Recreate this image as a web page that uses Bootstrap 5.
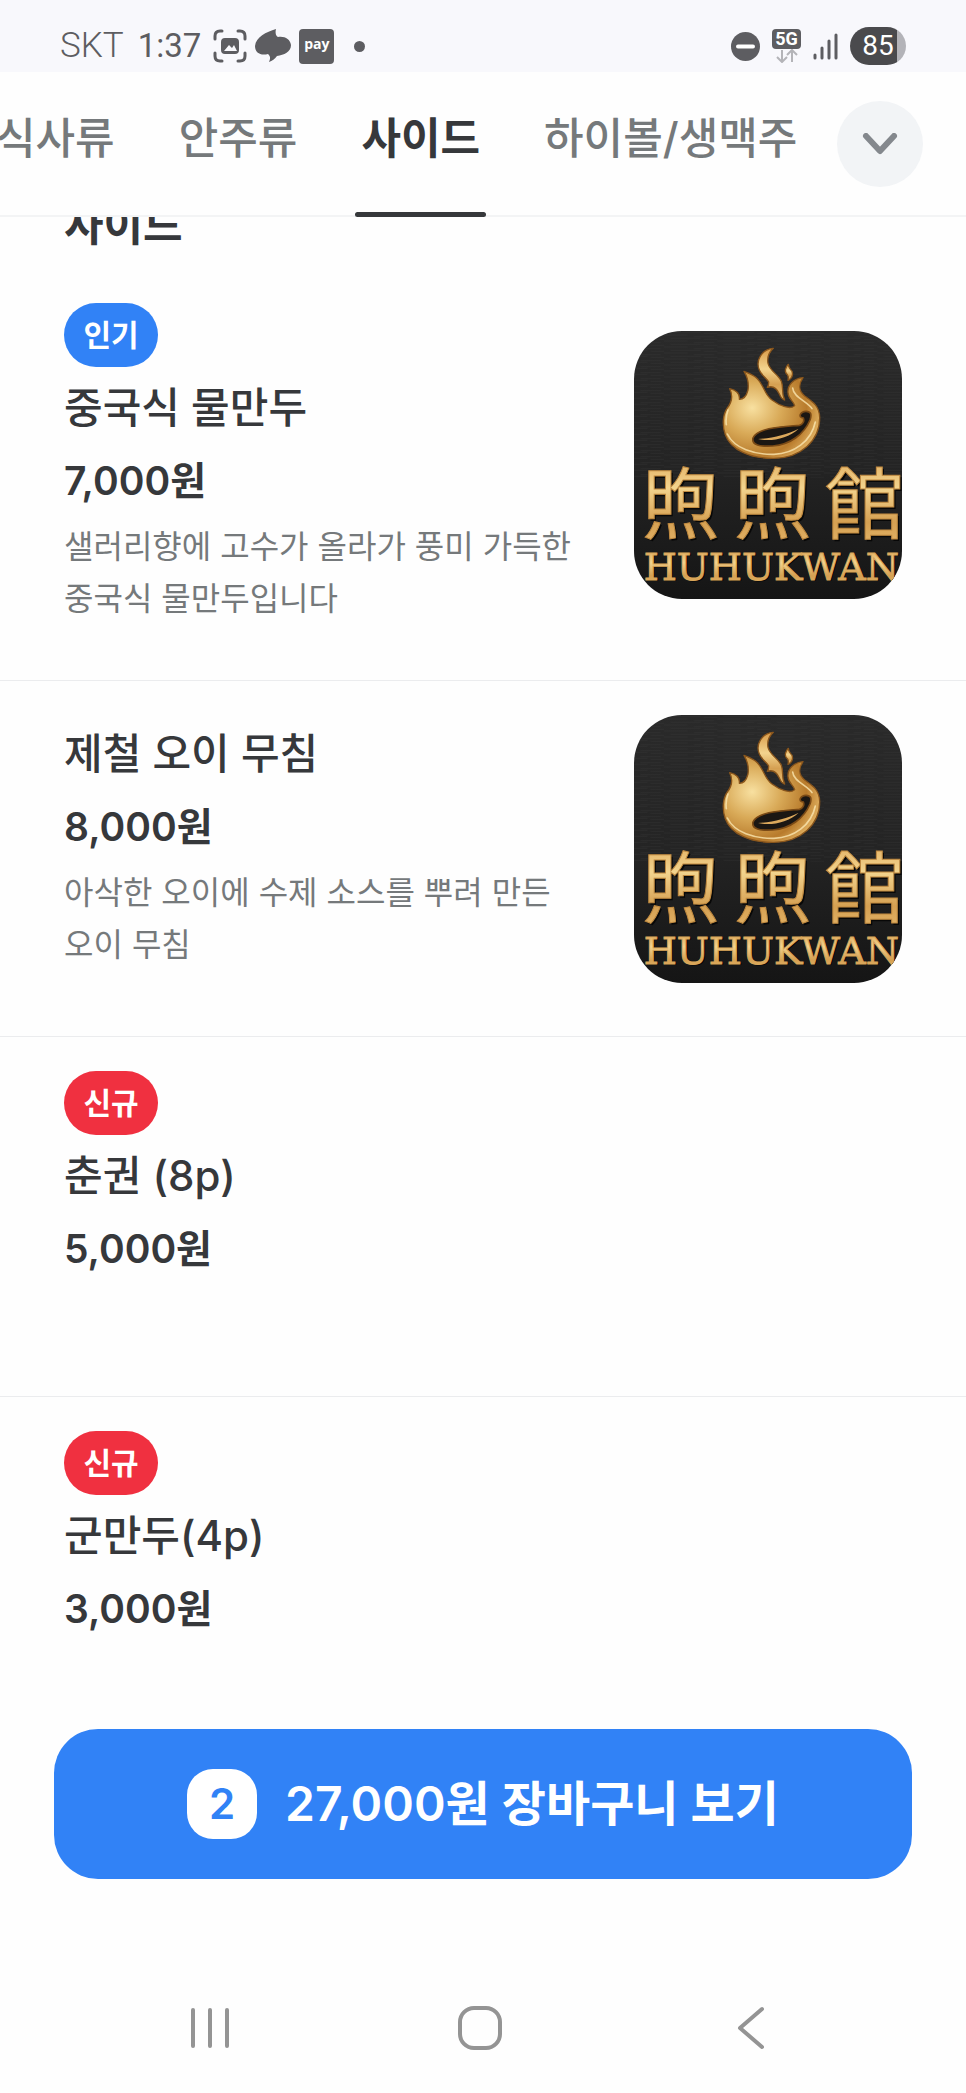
<!DOCTYPE html>
<html lang="ko">
<head>
<meta charset="utf-8">
<meta name="viewport" content="width=device-width, initial-scale=1">
<title>사이드 메뉴</title>
<link rel="stylesheet" href="https://cdn.jsdelivr.net/npm/bootstrap@5.3.0/dist/css/bootstrap.min.css">
<style>
  :root { --ink: #36383b; --dim: #75797b; --brand: #3182f6; --new: #f03040; --rule: #f3f4f5; }
  body { font-family: Inter, "Noto Sans CJK KR", sans-serif; color: var(--ink); background: #fefefe; }
  svg { display: block; flex: none; }

  .status-bar { height: 72px; padding: 20px 60px 0; background: #f8f8fc; color: #5d5d61; font: 400 35px/52px Roboto, sans-serif; }
  .carrier { font-weight: 300; }
  .clock { margin: 0 12px 0 14px; font-size: 33px; }
  .pay-chip { width: 35px; height: 35px; border-radius: 4px; background: #5d5d61; color: #fff; font: 700 14px/30px "Open Sans", sans-serif; text-align: center; }
  .dot { width: 11px; height: 11px; margin-left: 20px; background: #5d5d61; }
  .net { width: 29px; height: 20px; border-radius: 4px; background: #5d5d61; color: #fff; font: 700 18px/20px Roboto, sans-serif; text-align: center; }
  .signals { gap: 12px; }
  .battery { width: 56px; height: 38px; border-radius: 19px; background: linear-gradient(90deg, #4a4a4d 47px, #b3b3b8 47px); color: #fff; font: 400 28px/38px Roboto, sans-serif; text-align: center; }

  .tab-bar { height: 145px; padding-right: 43px; border-bottom: 2px solid var(--rule); }
  .tab-list { margin-left: -10px; gap: 52px; height: 145px; }
  .tab-list .nav-link { height: 145px; padding: 36px 6px 0; font-size: 43px; line-height: 60px; font-weight: 500; color: var(--dim); white-space: nowrap; }
  .tab-list .nav-link.active { color: var(--ink); font-weight: 700; position: relative; }
  .tab-list .nav-link.active::after { content: ""; position: absolute; left: 0; right: 0; bottom: 0; height: 5px; border-radius: 3px; background: var(--ink); }
  .more-btn { width: 86px; height: 86px; background: #f2f4f6; }

  .section-title { margin: -22px 0 14px; padding: 0 64px; font-size: 43px; line-height: 60px; font-weight: 700; }
  .menu-item { padding: 34px 64px 53px; border-bottom: 1px solid #ebecee; }
  .menu-item.no-photo { min-height: 360px; }
  .menu-item:last-child { border: 0; min-height: 0; padding-bottom: 0; }
  .tag { width: 94px; height: 64px; margin-bottom: 12px; border-radius: 32px; color: #fff; font-size: 30px; line-height: 64px; font-weight: 700; text-align: center; }
  .tag-hot { background: var(--brand); }
  .tag-new { background: var(--new); }
  .item-name { margin: 0 0 14px; font-size: 42px; line-height: 58px; font-weight: 500; }
  .item-price { margin: 0; font-size: 39px; line-height: 60px; font-weight: 600; }
  .item-desc { margin: 10px 0 2px; font-size: 32px; line-height: 52px; color: var(--dim); }
  .thumb { width: 268px; height: 268px; border-radius: 48px; }

  .cart-area { padding: 0 54px; }
  .cart-btn, .cart-btn:hover { height: 150px; border-radius: 44px; background: var(--brand); color: #fff; gap: 28px; font-size: 48px; font-weight: 600; }
  .count { width: 70px; height: 70px; border-radius: 26px; background: #fff; color: var(--brand); font-size: 42px; line-height: 70px; }
  .system-nav { height: 130px; margin-top: 84px; padding: 0 80px 0 75px; }
</style>
</head>
<body>
<!-- artwork shared by the menu thumbnails -->
<svg width="0" height="0" class="position-absolute" aria-hidden="true">
  <defs>
    <linearGradient id="gold" x1="0" y1="0" x2="0" y2="1"><stop offset="0" stop-color="#d89a48"/><stop offset=".4" stop-color="#f3d48e"/><stop offset=".7" stop-color="#d5a052"/><stop offset="1" stop-color="#e9bd72"/></linearGradient>
    <radialGradient id="body" cx=".3" cy=".42" r=".75"><stop offset="0" stop-color="#f8e0a0"/><stop offset=".4" stop-color="#d9aa58"/><stop offset=".75" stop-color="#b87b2c"/><stop offset="1" stop-color="#e6b868"/></radialGradient>
    <linearGradient id="slate" x1="0" y1="0" x2="0" y2="1"><stop offset="0" stop-color="#2a2a2a"/><stop offset=".5" stop-color="#242424"/><stop offset="1" stop-color="#151515"/></linearGradient>
    <pattern id="grain" width="160" height="18" patternUnits="userSpaceOnUse"><path d="M0 3h70M90 8h60M20 13h90M120 16h40" stroke="#3a3a3a" stroke-width="1.5" opacity=".6"/></pattern>
    <symbol id="logo" viewBox="70 63 804 804">
      <rect x="70" y="63" width="804" height="804" fill="url(#slate)"/>
      <rect x="70" y="63" width="804" height="440" fill="url(#grain)"/>
      <g stroke="#8a561c" stroke-width="4" stroke-linejoin="round">
        <path fill="url(#body)" d="M357 236C368 258 364 276 350 294C336 314 334 345 344 374C360 420 420 446 490 445C570 444 628 392 627 322C626 286 604 274 582 258C563 243 564 222 577 203C548 206 530 226 532 248C533 268 550 274 552 287C540 300 508 288 484 270C460 252 460 226 440 206C428 194 414 190 400 184C414 206 414 226 412 240C408 256 398 268 386 268C388 250 374 240 357 236Z"/>
        <path fill="url(#gold)" d="M488 115C452 118 434 152 446 180C452 196 468 204 474 216C474 224 472 230 470 232C488 226 500 238 506 252C510 262 516 268 522 270C511 248 520 236 512 214C504 194 478 184 472 160C469 144 476 126 488 115Z"/>
        <path fill="url(#gold)" d="M533 163C524 172 520 186 530 194C535 200 533 206 532 211C544 206 548 194 544 184C540 178 533 174 533 163Z"/>
      </g>
      <path fill="#1b1713" stroke="#7a4a16" stroke-width="5" d="M566 346C520 350 440 352 427 384C422 406 448 410 486 408C540 404 580 372 598 330C604 312 600 304 586 304C570 304 560 322 578 324C582 334 576 344 566 346Z"/>
      <path fill="#dca95c" d="M442 387C486 384 528 374 564 356C532 386 480 396 442 387Z"/>
      <path fill="none" stroke="#fae6b0" stroke-width="5" stroke-linecap="round" opacity=".8" d="M350 372C372 416 430 434 490 433C550 431 602 394 614 336M546 234C548 262 590 274 604 296M352 300C346 316 345 330 347 344"/>
      <g font-family="'Noto Sans CJK TC', sans-serif" font-weight="400" font-size="236">
        <g fill="#070707"><text x="96" y="676">煦</text><text x="372" y="676">煦</text><text x="648" y="676">館</text></g>
        <g fill="url(#gold)" stroke="#c08a40" stroke-width="3"><text x="91" y="670">煦</text><text x="367" y="670">煦</text><text x="643" y="670">館</text></g>
      </g>
      <g font-family="'DejaVu Serif', serif" font-size="114">
        <text x="103" y="814" fill="#050505">HUHUKWAN</text>
        <text x="99" y="810" fill="url(#gold)" stroke="#d9a65a" stroke-width="3">HUHUKWAN</text>
      </g>
    </symbol>
  </defs>
</svg>

<div class="d-flex flex-column min-vh-100 overflow-hidden">
  <div class="status-bar d-flex justify-content-between">
    <div class="d-flex align-items-center">
      <span class="carrier">SKT</span><span class="clock">1:37</span>
      <svg width="34" height="34" viewBox="0 0 34 34" fill="none" stroke="#5d5d61" stroke-width="3" stroke-linecap="round"><path d="M2 10V7q0-5 5-5h2M25 2h2q5 0 5 5v3M32 24v3q0 5-5 5h-2M9 32H7q-5 0-5-5v-3"/><rect x="9" y="10" width="16" height="14" rx="3" fill="#5d5d61" stroke-width="2"/><path d="M11 22l5-6 3 3 2-3 3 6z" fill="#f8f8fc" stroke="none"/></svg>
      <svg class="ms-2" width="36" height="34" viewBox="0 0 36 34" fill="#5d5d61"><path d="M21 0C20 4 21 7 23 8C30 7 35 10 36 16C36 23 29 26 22 27C20 30 17 32 14 33C16 29 15 27 13 25C6 27 0 24 0 17C1 8 11 3 21 0Z"/></svg>
      <span class="pay-chip ms-2">pay</span>
      <span class="dot rounded-circle"></span>
    </div>
    <div class="signals d-flex align-items-center">
      <svg width="29" height="29" viewBox="0 0 29 29"><circle cx="14.500" cy="14.500" r="14.500" fill="#5d5d61"/><path d="M7 14.500h15" stroke="#fff" stroke-width="4" stroke-linecap="round"/></svg>
      <div class="d-flex flex-column align-items-center"><span class="net">5G</span>
        <svg width="24" height="14" viewBox="0 0 24 14" fill="none" stroke="#b4b4b8" stroke-width="2"><path d="M7 1v11M2 8l5 5 5-5M17 13V2M12 6l5-5 5 5"/></svg></div>
      <svg width="25" height="27" viewBox="0 0 25 27" stroke="#5d5d61" stroke-width="3" stroke-linecap="round"><path d="M2 22v3M9 15v10M16 8v17M23 2v23"/></svg>
      <span class="battery">85</span>
    </div>
  </div>

  <header class="tab-bar d-flex align-items-center">
    <nav class="flex-grow-1 overflow-hidden align-self-start">
      <div class="nav flex-nowrap tab-list">
        <a class="nav-link" href="#meal">식사류</a>
        <a class="nav-link" href="#snack">안주류</a>
        <a class="nav-link active" href="#side" aria-current="page">사이드</a>
        <a class="nav-link" href="#drink">하이볼/생맥주</a>
      </div>
    </nav>
    <button type="button" class="more-btn btn rounded-circle border-0 p-0 d-flex align-items-center justify-content-center flex-shrink-0" aria-label="메뉴 더보기">
      <svg width="36" height="22" viewBox="0 0 36 22" fill="none" stroke="#84888d" stroke-width="6" stroke-linecap="round" stroke-linejoin="round"><path d="M4 3l14 15L32 3"/></svg>
    </button>
  </header>

  <main id="side" class="flex-grow-1 overflow-hidden">
    <h2 class="section-title">사이드</h2>
    <article class="menu-item d-flex align-items-center justify-content-between">
      <div>
        <div class="tag tag-hot">인기</div>
        <h3 class="item-name">중국식 물만두</h3>
        <p class="item-price">7,000원</p>
        <p class="item-desc">샐러리향에 고수가 올라가 풍미 가득한<br>중국식 물만두입니다</p>
      </div>
      <svg class="thumb" role="img" aria-label="중국식 물만두"><use href="#logo"/></svg>
    </article>
    <article class="menu-item d-flex align-items-center justify-content-between">
      <div>
        <h3 class="item-name">제철 오이 무침</h3>
        <p class="item-price">8,000원</p>
        <p class="item-desc">아삭한 오이에 수제 소스를 뿌려 만든<br>오이 무침</p>
      </div>
      <svg class="thumb" role="img" aria-label="제철 오이 무침"><use href="#logo"/></svg>
    </article>
    <article class="menu-item no-photo">
      <div class="tag tag-new">신규</div>
      <h3 class="item-name">춘권 (8p)</h3>
      <p class="item-price">5,000원</p>
    </article>
    <article class="menu-item no-photo">
      <div class="tag tag-new">신규</div>
      <h3 class="item-name">군만두(4p)</h3>
      <p class="item-price">3,000원</p>
    </article>
  </main>

  <footer>
    <div class="cart-area">
      <button type="button" class="cart-btn btn border-0 w-100 d-flex align-items-center justify-content-center"><span class="count">2</span><span>27,000원 장바구니 보기</span></button>
    </div>
    <nav class="system-nav d-flex" aria-label="시스템">
      <button type="button" class="btn border-0 flex-fill w-100 d-flex align-items-center justify-content-center" aria-label="최근 앱"><svg width="40" height="42" viewBox="0 0 40 42" stroke="#949494" stroke-width="4" stroke-linecap="round"><path d="M3 3v36M20 3v36M37 3v36"/></svg></button>
      <button type="button" class="btn border-0 flex-fill w-100 d-flex align-items-center justify-content-center" aria-label="홈"><svg width="44" height="44" viewBox="0 0 44 44" fill="none" stroke="#949494" stroke-width="4"><rect x="2" y="2" width="40" height="40" rx="14"/></svg></button>
      <button type="button" class="btn border-0 flex-fill w-100 d-flex align-items-center justify-content-center" aria-label="뒤로"><svg width="28" height="44" viewBox="0 0 28 44" fill="none" stroke="#949494" stroke-width="4" stroke-linecap="round" stroke-linejoin="round"><path d="M25 3L3 22l22 19"/></svg></button>
    </nav>
  </footer>
</div>
<script src="https://cdn.jsdelivr.net/npm/bootstrap@5.3.0/dist/js/bootstrap.bundle.min.js"></script>
</body>
</html>
